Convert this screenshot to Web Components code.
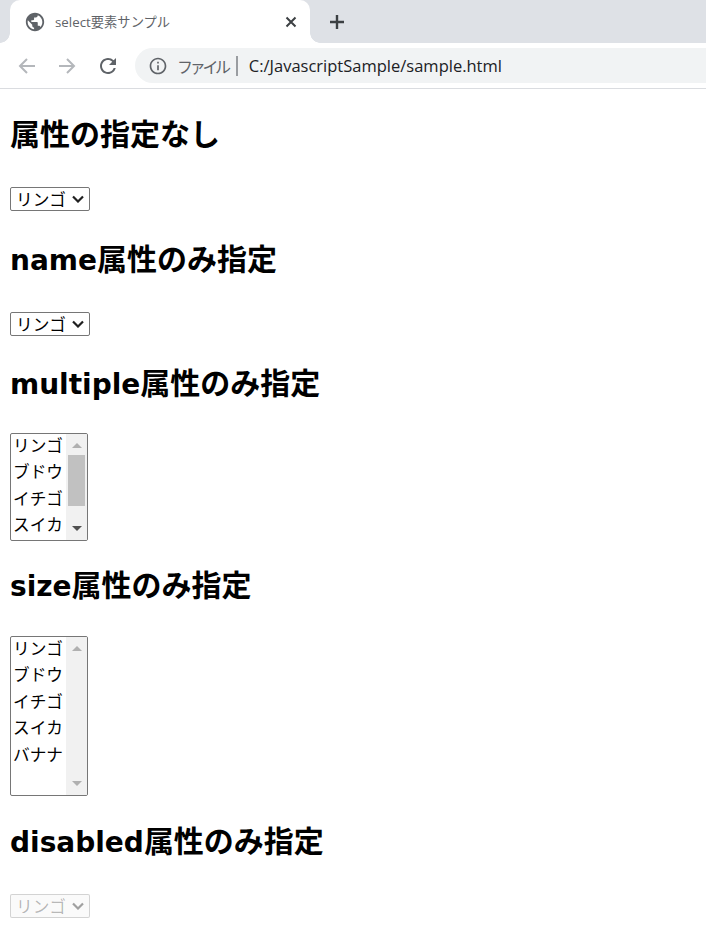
<!DOCTYPE html>
<html lang="ja">
<head>
<meta charset="utf-8">
<title>select要素サンプル</title>
<style>
    html, body { margin: 0; padding: 0; background: #fff; }
    body { width: 706px; height: 948px; overflow: hidden; font-family: "Noto Sans CJK JP", sans-serif; }
</style>
</head>
<body>
<browser-frame tab-title="select要素サンプル" scheme="ファイル" url="C:/JavascriptSample/sample.html"></browser-frame>
<sample-page>
    <sample-section title="属性の指定なし" gap="34" style="--top: 24px">
        <drop-select text="リンゴ"></drop-select>
    </sample-section>
    <sample-section title="name属性のみ指定" gap="34" style="--top: 27px">
        <drop-select text="リンゴ"></drop-select>
    </sample-section>
    <sample-section title="multiple属性のみ指定" gap="31" style="--top: 26px">
        <list-select items="リンゴ,ブドウ,イチゴ,スイカ" height="108" thumb></list-select>
    </sample-section>
    <sample-section title="size属性のみ指定" gap="32" style="--top: 23px">
        <list-select items="リンゴ,ブドウ,イチゴ,スイカ,バナナ" height="160" faded-arrows></list-select>
    </sample-section>
    <sample-section title="disabled属性のみ指定" gap="34" style="--top: 24px">
        <drop-select text="リンゴ" disabled></drop-select>
    </sample-section>
</sample-page>

<script>
class BrowserFrame extends HTMLElement {
    connectedCallback() {
        this.attachShadow({ mode: 'open' });
        this.shadowRoot.innerHTML = `
            <style>
                :host { display: block; height: 89px; font-family: "Open Sans", "Noto Sans CJK JP", sans-serif; color: #5f6368; }
                .strip { height: 43px; background: #dee1e6; display: flex; align-items: flex-end; padding-left: 10px; }
                .tab {
                    width: 300px; height: 43px; box-sizing: border-box; background: #fff;
                    border-radius: 10px 10px 0 0; display: flex; align-items: center;
                    padding: 0 12px 0 14px; position: relative;
                }
                .tab::before, .tab::after { content: ''; position: absolute; bottom: 0; width: 10px; height: 10px; }
                .tab::before { left: -10px; background: radial-gradient(circle at 0 0, #dee1e6 9.5px, #fff 10px); }
                .tab::after { right: -10px; background: radial-gradient(circle at 100% 0, #dee1e6 9.5px, #fff 10px); }
                .title { flex: 1; margin-left: 9px; font-size: 13.3px; color: #5f6368; white-space: nowrap; }
                .new { margin-left: 17px; margin-bottom: 11px; width: 20px; height: 20px; }
                .bar { height: 45px; background: #fff; display: flex; align-items: center; border-bottom: 1px solid #dadce0; }
                .nav { display: flex; align-items: center; gap: 20px; margin-left: 17px; width: 118px; }
                .reload { margin-left: -1px; }
                .omni {
                    flex: 1; height: 35px; background: #f1f3f4; border-radius: 17.5px 0 0 17.5px;
                    display: flex; align-items: center; padding-left: 13px; font-size: 16.5px;
                }
                .scheme { margin-left: 9px; font-size: 16px; letter-spacing: -3.3px; color: #5f6368; }
                .sep { width: 2px; height: 20px; background: #9a9da1; margin: 0 11px 0 8px; }
                .url { color: #202124; white-space: nowrap; }
            </style>
            <div class="strip">
                <div class="tab">
                    <svg width="22" height="22" viewBox="0 0 24 24"><path fill="#5f6368" d="M12 2C6.48 2 2 6.48 2 12s4.48 10 10 10 10-4.48 10-10S17.52 2 12 2zm-1 17.93c-3.95-.49-7-3.85-7-7.93 0-.62.08-1.21.21-1.79L9 15v1c0 1.1.9 2 2 2v1.93zm6.9-2.54c-.26-.81-1-1.39-1.9-1.39h-1v-3c0-.55-.45-1-1-1H8v-2h2c.55 0 1-.45 1-1V7h2c1.1 0 2-.9 2-2v-.41c2.93 1.19 5 4.06 5 7.41 0 2.08-.8 3.97-2.1 5.39z"/></svg>
                    <span class="title"></span>
                    <svg width="14" height="14" viewBox="0 0 14 14"><path d="M2.5 2.5l9 9M11.5 2.5l-9 9" stroke="#3c4043" stroke-width="2" fill="none"/></svg>
                </div>
                <svg class="new" viewBox="0 0 20 20"><path d="M10 3v14M3 10h14" stroke="#3c4043" stroke-width="2.4" fill="none"/></svg>
            </div>
            <div class="bar">
                <div class="nav">
                    <svg width="20" height="20" viewBox="0 0 20 20"><path d="M18 10H3.5M10 3l-7 7 7 7" stroke="#b4b7bb" stroke-width="2" fill="none"/></svg>
                    <svg width="20" height="20" viewBox="0 0 20 20"><path d="M2 10h14.5M10 3l7 7-7 7" stroke="#b4b7bb" stroke-width="2" fill="none"/></svg>
                    <svg class="reload" width="24" height="24" viewBox="0 0 24 24"><path fill="#5f6368" d="M17.65 6.35A7.958 7.958 0 0 0 12 4c-4.42 0-7.99 3.58-7.99 8s3.57 8 7.99 8c3.73 0 6.84-2.55 7.73-6h-2.08A5.99 5.99 0 0 1 12 18c-3.31 0-6-2.69-6-6s2.69-6 6-6c1.66 0 3.14.69 4.22 1.78L13 11h7V4l-2.35 2.35z"/></svg>
                </div>
                <div class="omni">
                    <svg width="20" height="20" viewBox="0 0 24 24"><path fill="#5f6368" d="M11 7h2v2h-2zm0 4h2v6h-2zm1-9C6.48 2 2 6.48 2 12s4.48 10 10 10 10-4.48 10-10S17.52 2 12 2zm0 18c-4.41 0-8-3.59-8-8s3.59-8 8-8 8 3.59 8 8-3.59 8-8 8z"/></svg>
                    <span class="scheme"></span>
                    <span class="sep"></span>
                    <span class="url"></span>
                </div>
            </div>
        `;
        this.shadowRoot.querySelector('.title').textContent = this.getAttribute('tab-title');
        this.shadowRoot.querySelector('.scheme').textContent = this.getAttribute('scheme');
        this.shadowRoot.querySelector('.url').textContent = this.getAttribute('url');
    }
}
customElements.define('browser-frame', BrowserFrame);

class SamplePage extends HTMLElement {
    connectedCallback() {
        this.attachShadow({ mode: 'open' });
        this.shadowRoot.innerHTML = `
            <style>
                :host { display: block; padding: 0 10px; color: #000; font-family: "Noto Sans CJK JP", sans-serif; }
            </style>
            <slot></slot>
        `;
    }
}
customElements.define('sample-page', SamplePage);

class SampleSection extends HTMLElement {
    connectedCallback() {
        this.attachShadow({ mode: 'open' });
        this.shadowRoot.innerHTML = `
            <style>
                :host { display: block; padding-top: var(--top, 26px); }
                h2 { margin: 0; height: 40px; font-size: 30px; line-height: 38px; font-weight: 700; white-space: nowrap; }
                .latin { font-family: "DejaVu Sans", sans-serif; font-size: 28px; line-height: 1; }
                .body { display: flex; }
            </style>
            <h2></h2>
            <div class="body"><slot></slot></div>
        `;
        // latin part of the title is set wider than the kana/kanji
        const h2 = this.shadowRoot.querySelector('h2');
        this.getAttribute('title').split(/([a-z]+)/).forEach(part => {
            if (/^[a-z]+$/.test(part)) {
                const s = document.createElement('span');
                s.className = 'latin';
                s.textContent = part;
                h2.appendChild(s);
            } else if (part) {
                h2.appendChild(document.createTextNode(part));
            }
        });
        this.shadowRoot.querySelector('.body').style.marginTop = this.getAttribute('gap') + 'px';
    }
}
customElements.define('sample-section', SampleSection);

class DropSelect extends HTMLElement {
    connectedCallback() {
        this.attachShadow({ mode: 'open' });
        this.shadowRoot.innerHTML = `
            <style>
                :host { display: block; }
                .box {
                    width: 80px; height: 24px; box-sizing: border-box; border: 1px solid #767676; border-radius: 2px;
                    display: flex; align-items: center; padding-left: 5px; font-size: 16.67px; line-height: 22px; background: #fff;
                }
                span { flex: 1; white-space: nowrap; }
                svg { margin-right: 5px; }
                :host([disabled]) .box { border-color: rgba(118,118,118,.3); color: rgba(16,16,16,.3); background: rgba(239,239,239,.3); }
            </style>
            <div class="box">
                <span></span>
                <svg width="12" height="8" viewBox="0 0 12 8"><path d="M1 1.5l5 5 5-5" fill="none" stroke-width="2.2" stroke="${this.hasAttribute('disabled') ? '#a0a0a0' : '#202020'}"/></svg>
            </div>
        `;
        this.shadowRoot.querySelector('span').textContent = this.getAttribute('text');
    }
}
customElements.define('drop-select', DropSelect);

class ListSelect extends HTMLElement {
    connectedCallback() {
        const items = this.getAttribute('items').split(',');
        const arrow = this.hasAttribute('faded-arrows') ? '#b0b0b0' : '#505050';
        this.attachShadow({ mode: 'open' });
        this.shadowRoot.innerHTML = `
            <style>
                :host { display: block; }
                .box {
                    width: 78px; box-sizing: border-box; border: 1px solid #767676; border-radius: 2px;
                    display: flex; overflow: hidden; background: #fff;
                }
                .opts { flex: 1; padding-left: 2px; margin-top: -2px; font-size: 16.67px; }
                .opt { height: 26.4px; line-height: 26px; white-space: nowrap; overflow: hidden; }
                .track { width: 21px; background: #f1f1f1; display: flex; flex-direction: column; align-items: center; padding-top: 9px; box-sizing: border-box; position: relative; }
                .thumb { position: absolute; top: 21px; left: 2px; width: 17px; height: 51px; background: #c1c1c1; }
                .up, .down { width: 0; height: 0; border-left: 5px solid transparent; border-right: 5px solid transparent; }
                .up { border-bottom: 5px solid #b0b0b0; }
                .down { border-top: 5px solid ${arrow}; margin-top: auto; margin-bottom: 9px; }
            </style>
            <div class="box">
                <div class="opts"></div>
                <div class="track">
                    <div class="up"></div>
                    ${this.hasAttribute('thumb') ? '<div class="thumb"></div>' : ''}
                    <div class="down"></div>
                </div>
            </div>
        `;
        this.shadowRoot.querySelector('.box').style.height = this.getAttribute('height') + 'px';
        const opts = this.shadowRoot.querySelector('.opts');
        items.forEach(t => {
            const d = document.createElement('div');
            d.className = 'opt';
            d.textContent = t;
            opts.appendChild(d);
        });
    }
}
customElements.define('list-select', ListSelect);
</script>
</body>
</html>
